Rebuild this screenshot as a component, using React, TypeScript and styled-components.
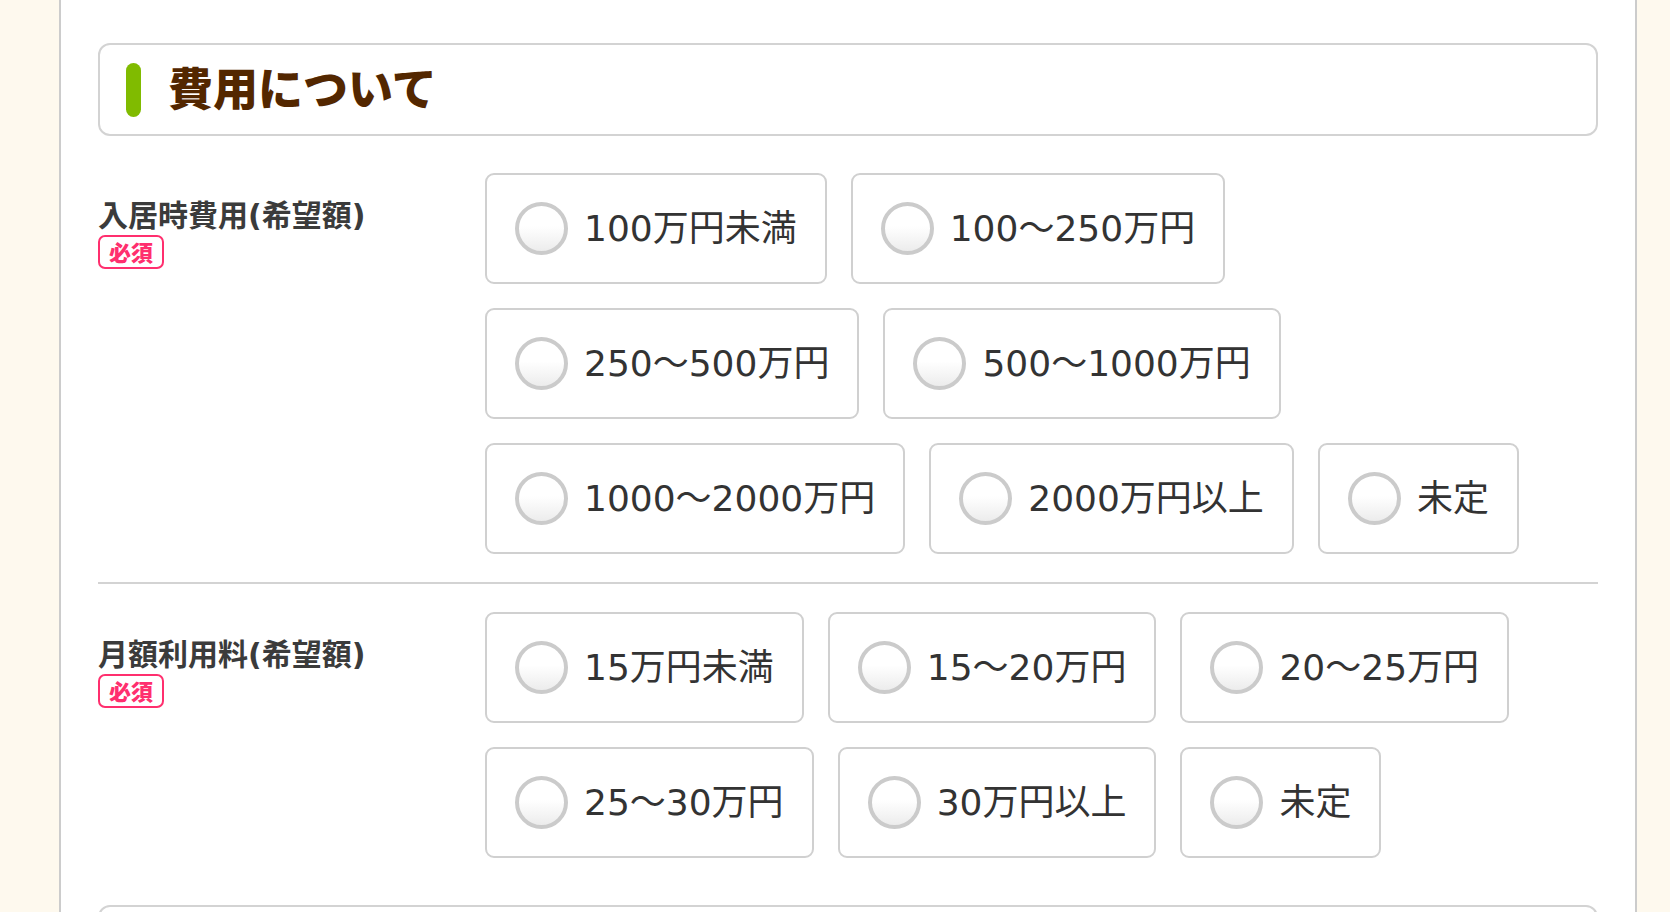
import React from "react";
import styled, { createGlobalStyle } from "styled-components";

const GlobalStyle = createGlobalStyle`
  html, body {
    margin: 0;
    padding: 0;
    background: #fef9ee;
  }
  * { box-sizing: border-box; }
`;

const Page = styled.div`
  display: flex;
  min-height: 100vh;
  padding-left: 59px;
`;

const Panel = styled.main`
  width: 1578px;
  min-height: 100vh;
  background: #ffffff;
  border-left: 2px solid #cccccc;
  border-right: 2px solid #cccccc;
  padding: 43px 37px 0;
  font-family: "DejaVu Sans", "Noto Sans CJK JP", sans-serif;
`;

const HeadingBox = styled.div<{ $top?: number }>`
  display: flex;
  align-items: center;
  gap: 27px;
  height: 93px;
  margin-top: ${(p) => p.$top ?? 0}px;
  margin-bottom: 9px;
  padding-left: 26px;
  border: 2px solid #d3d3d3;
  border-radius: 12px;
  background: #fff;
`;

const Bar = styled.span`
  display: block;
  width: 15px;
  height: 54px;
  border-radius: 8px;
  background: #80bb00;
`;

const HeadingText = styled.h2`
  margin: 0;
  padding-bottom: 7px;
  font-family: "Noto Sans CJK JP", sans-serif;
  font-size: 45px;
  font-weight: 900;
  line-height: 1;
  color: #532700;
`;

const Row = styled.section<{ $last?: boolean }>`
  display: grid;
  grid-template-columns: 387px 1fr;
  padding: 28px 0;
  border-bottom: ${(p) => (p.$last ? "none" : "2px solid #d3d3d3")};
`;

const LabelCol = styled.div`
  display: flex;
  flex-direction: column;
  align-items: flex-start;
  padding-top: 25px;
`;

const LabelText = styled.div`
  font-size: 30px;
  font-weight: 700;
  line-height: 36px;
  color: #3b3b3b;
`;

const Badge = styled.span`
  display: inline-block;
  margin-top: 1px;
  height: 34px;
  padding: 0 9px;
  border: 2px solid #ff2f6e;
  border-radius: 7px;
  font-family: "Noto Sans CJK JP", sans-serif;
  font-size: 22px;
  font-weight: 900;
  line-height: 29px;
  color: #ff2f6e;
`;

const Options = styled.div`
  display: flex;
  flex-wrap: wrap;
  align-content: flex-start;
  gap: 24px 24px;
`;

const Option = styled.label`
  display: inline-flex;
  align-items: center;
  gap: 16px;
  height: 111px;
  padding: 0 28px;
  border: 2px solid #d0d0d0;
  border-radius: 9px;
  background: #fff;
  cursor: pointer;
`;

const HiddenInput = styled.input`
  position: absolute;
  opacity: 0;
  width: 0;
  height: 0;
`;

const Circle = styled.span`
  display: block;
  flex: none;
  width: 53px;
  height: 53px;
  border-radius: 50%;
  border: 4px solid #cbcbcb;
  background: linear-gradient(to bottom, #ffffff 45%, #ececec 100%);
`;

const OptionText = styled.span`
  font-size: 36px;
  line-height: 1;
  color: #333333;
  white-space: nowrap;
`;

type Field = { name: string; label: string; options: string[] };

const fields: Field[] = [
  {
    name: "initial",
    label: "入居時費用(希望額)",
    options: [
      "100万円未満",
      "100〜250万円",
      "250〜500万円",
      "500〜1000万円",
      "1000〜2000万円",
      "2000万円以上",
      "未定",
    ],
  },
  {
    name: "monthly",
    label: "月額利用料(希望額)",
    options: [
      "15万円未満",
      "15〜20万円",
      "20〜25万円",
      "25〜30万円",
      "30万円以上",
      "未定",
    ],
  },
];

export default function App() {
  return (
    <>
      <GlobalStyle />
      <Page>
        <Panel>
          <HeadingBox>
            <Bar />
            <HeadingText>費用について</HeadingText>
          </HeadingBox>
          {fields.map((f, i) => (
            <Row key={f.name} $last={i === fields.length - 1}>
              <LabelCol>
                <LabelText>{f.label}</LabelText>
                <Badge>必須</Badge>
              </LabelCol>
              <Options>
                {f.options.map((o) => (
                  <Option key={o}>
                    <HiddenInput type="radio" name={f.name} value={o} />
                    <Circle />
                    <OptionText>{o}</OptionText>
                  </Option>
                ))}
              </Options>
            </Row>
          ))}
          <HeadingBox $top={19}>
            <Bar />
          </HeadingBox>
        </Panel>
      </Page>
    </>
  );
}
